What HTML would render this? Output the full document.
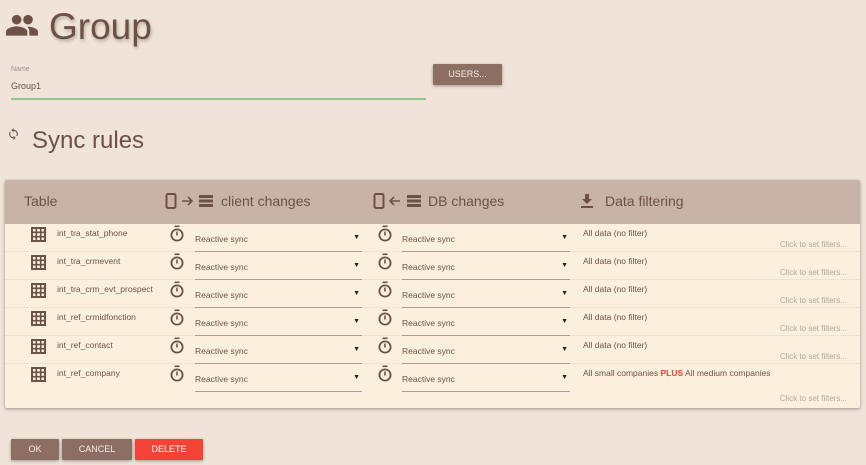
<!DOCTYPE html>
<html><head><meta charset="utf-8"><style>
*{margin:0;padding:0;box-sizing:border-box}
body{width:866px;height:465px;background:#f0e3d7;font-family:"Liberation Sans",sans-serif;color:#6d5147;position:relative;overflow:hidden}
.a{position:absolute;white-space:nowrap;display:block}
.btn{position:absolute;background:#8d6e62;color:#f5ece6;font-size:9px;text-align:center;box-shadow:0 1px 3px rgba(0,0,0,.35);border-radius:1px}
.card{position:absolute;left:5px;top:180px;width:855px;height:228px;background:#faf0dd;box-shadow:0 1px 3px rgba(0,0,0,.35);border-radius:2px;overflow:hidden}
.hdr{position:absolute;left:0;top:0;width:855px;height:44px;background:#c8b3a9}
.ht{position:absolute;top:13px;font-size:14px;color:#6d5147;white-space:nowrap}
.row{position:absolute;left:0;width:855px;height:28px;border-bottom:1px solid #ece2d3}
.nm{position:absolute;left:52px;top:4px;font-size:8.5px;white-space:nowrap}
.sel{position:absolute;top:0;height:28px;border-bottom:1px solid #a89d96;font-size:8.5px}
.sel span{position:absolute;left:0;top:10px;white-space:nowrap}
.sel b{position:absolute;right:2px;top:10px;font-size:7px;color:#222}
.df{position:absolute;left:578px;top:4px;font-size:8.5px;white-space:nowrap}
.cf{position:absolute;right:13px;top:16px;font-size:8px;color:#b3a69f;white-space:nowrap}
.g{position:absolute;left:26px;top:3px;width:15px;height:15px}
.t1{position:absolute;left:165px;top:1px;width:14px;height:17px}
.t2{position:absolute;left:373px;top:1px;width:14px;height:17px}
</style></head><body>
<svg class="a" style="left:6px;top:14px;width:32px;height:22px" width="32" height="22" viewBox="0 0 24 16"><circle cx="8" cy="4" r="3.6" fill="#6d5147"/><circle cx="16.5" cy="4" r="3.6" fill="#6d5147"/><path d="M0 16v-3c0-2.5 5-4 8-4s8 1.5 8 4v3z" fill="#6d5147"/><path d="M16 9.2c3 0 8 1.3 8 3.8v3h-6.5v-3c0-1.5-.6-2.7-1.5-3.8z" fill="#6d5147"/></svg>
<div class="a" style="left:49px;top:6px;font-size:37px;color:#6d5147;text-shadow:1px 2px 3px rgba(0,0,0,.25)">Group</div>
<div class="a" style="left:11px;top:66px;font-size:7px;color:#9d8f88">Name</div>
<div class="a" style="left:11px;top:81px;font-size:9px">Group1</div>
<div class="a" style="left:11px;top:98px;width:415px;height:2px;background:#8fc68c"></div>
<div class="btn" style="left:433px;top:64px;width:69px;height:21px;line-height:21px">USERS...</div>
<svg class="a" style="left:7px;top:127px;width:13px;height:14px" width="13" height="14" viewBox="0 0 24 24"><path d="M12 4V1L8 5l4 4V6c3.3 0 6 2.7 6 6 0 1-.3 2-.7 2.8l1.5 1.5C19.5 15 20 13.6 20 12c0-4.4-3.6-8-8-8zm0 14c-3.3 0-6-2.7-6-6 0-1 .3-2 .7-2.8L5.2 7.7C4.5 9 4 10.4 4 12c0 4.4 3.6 8 8 8v3l4-4-4-4z" fill="#6d5147"/></svg>
<div class="a" style="left:32px;top:127px;font-size:24px">Sync rules</div>

<div class="card">
<div class="hdr">
<div class="ht" style="left:19px">Table</div>
<svg class="a" style="left:160px;top:13px;width:52px;height:16px" width="52" height="16" viewBox="0 0 52 16"><rect x="1.5" y="1" width="9" height="14" rx="1.5" fill="none" stroke="#6d5147" stroke-width="2"/><path d="M17 8h10M23 4l4 4-4 4" fill="none" stroke="#6d5147" stroke-width="1.6"/><rect x="34" y="2" width="14" height="3" fill="#6d5147"/><rect x="34" y="6.5" width="14" height="3" fill="#6d5147"/><rect x="34" y="11" width="14" height="3" fill="#6d5147"/></svg>
<div class="ht" style="left:216px">client changes</div>
<svg class="a" style="left:368px;top:13px;width:52px;height:16px" width="52" height="16" viewBox="0 0 52 16"><rect x="1.5" y="1" width="9" height="14" rx="1.5" fill="none" stroke="#6d5147" stroke-width="2"/><path d="M17 8h10M21 4l-4 4 4 4" fill="none" stroke="#6d5147" stroke-width="1.6"/><rect x="34" y="2" width="14" height="3" fill="#6d5147"/><rect x="34" y="6.5" width="14" height="3" fill="#6d5147"/><rect x="34" y="11" width="14" height="3" fill="#6d5147"/></svg>
<div class="ht" style="left:423px">DB changes</div>
<svg class="a" style="left:576px;top:14px;width:12px;height:14px" width="12" height="14" viewBox="0 0 12 14"><path d="M4 0h4v5h3l-5 5-5-5h3z" fill="#6d5147"/><rect x="0" y="12" width="12" height="2" fill="#6d5147"/></svg>
<div class="ht" style="left:600px">Data filtering</div>
</div>

<div class="row" style="top:44px">
<svg class="g" viewBox="0 0 15 15"><rect x="1" y="1" width="13" height="13" fill="none" stroke="#6d5147" stroke-width="2"/><path d="M5.3 1v13M9.7 1v13M1 5.3h13M1 9.7h13" stroke="#6d5147" stroke-width="1.6"/></svg>
<div class="nm">int_tra_stat_phone</div>
<svg class="t1" viewBox="0 0 14 17"><rect x="4.5" y="0.5" width="5" height="1.6" fill="#6d5147"/><circle cx="7" cy="10" r="5.6" fill="none" stroke="#6d5147" stroke-width="1.8"/><path d="M7 6.5v4" stroke="#6d5147" stroke-width="1.6"/></svg>
<div class="sel" style="left:190px;width:167px"><span>Reactive sync</span><b>▼</b></div>
<svg class="t2" viewBox="0 0 14 17"><rect x="4.5" y="0.5" width="5" height="1.6" fill="#6d5147"/><circle cx="7" cy="10" r="5.6" fill="none" stroke="#6d5147" stroke-width="1.8"/><path d="M7 6.5v4" stroke="#6d5147" stroke-width="1.6"/></svg>
<div class="sel" style="left:397px;width:168px"><span>Reactive sync</span><b>▼</b></div>
<div class="df">All data (no filter)</div><div class="cf">Click to set filters...</div>
</div>

<div class="row" style="top:72px">
<svg class="g" viewBox="0 0 15 15"><rect x="1" y="1" width="13" height="13" fill="none" stroke="#6d5147" stroke-width="2"/><path d="M5.3 1v13M9.7 1v13M1 5.3h13M1 9.7h13" stroke="#6d5147" stroke-width="1.6"/></svg>
<div class="nm">int_tra_crmevent</div>
<svg class="t1" viewBox="0 0 14 17"><rect x="4.5" y="0.5" width="5" height="1.6" fill="#6d5147"/><circle cx="7" cy="10" r="5.6" fill="none" stroke="#6d5147" stroke-width="1.8"/><path d="M7 6.5v4" stroke="#6d5147" stroke-width="1.6"/></svg>
<div class="sel" style="left:190px;width:167px"><span>Reactive sync</span><b>▼</b></div>
<svg class="t2" viewBox="0 0 14 17"><rect x="4.5" y="0.5" width="5" height="1.6" fill="#6d5147"/><circle cx="7" cy="10" r="5.6" fill="none" stroke="#6d5147" stroke-width="1.8"/><path d="M7 6.5v4" stroke="#6d5147" stroke-width="1.6"/></svg>
<div class="sel" style="left:397px;width:168px"><span>Reactive sync</span><b>▼</b></div>
<div class="df">All data (no filter)</div><div class="cf">Click to set filters...</div>
</div>

<div class="row" style="top:100px">
<svg class="g" viewBox="0 0 15 15"><rect x="1" y="1" width="13" height="13" fill="none" stroke="#6d5147" stroke-width="2"/><path d="M5.3 1v13M9.7 1v13M1 5.3h13M1 9.7h13" stroke="#6d5147" stroke-width="1.6"/></svg>
<div class="nm">int_tra_crm_evt_prospect</div>
<svg class="t1" viewBox="0 0 14 17"><rect x="4.5" y="0.5" width="5" height="1.6" fill="#6d5147"/><circle cx="7" cy="10" r="5.6" fill="none" stroke="#6d5147" stroke-width="1.8"/><path d="M7 6.5v4" stroke="#6d5147" stroke-width="1.6"/></svg>
<div class="sel" style="left:190px;width:167px"><span>Reactive sync</span><b>▼</b></div>
<svg class="t2" viewBox="0 0 14 17"><rect x="4.5" y="0.5" width="5" height="1.6" fill="#6d5147"/><circle cx="7" cy="10" r="5.6" fill="none" stroke="#6d5147" stroke-width="1.8"/><path d="M7 6.5v4" stroke="#6d5147" stroke-width="1.6"/></svg>
<div class="sel" style="left:397px;width:168px"><span>Reactive sync</span><b>▼</b></div>
<div class="df">All data (no filter)</div><div class="cf">Click to set filters...</div>
</div>

<div class="row" style="top:128px">
<svg class="g" viewBox="0 0 15 15"><rect x="1" y="1" width="13" height="13" fill="none" stroke="#6d5147" stroke-width="2"/><path d="M5.3 1v13M9.7 1v13M1 5.3h13M1 9.7h13" stroke="#6d5147" stroke-width="1.6"/></svg>
<div class="nm">int_ref_crmidfonction</div>
<svg class="t1" viewBox="0 0 14 17"><rect x="4.5" y="0.5" width="5" height="1.6" fill="#6d5147"/><circle cx="7" cy="10" r="5.6" fill="none" stroke="#6d5147" stroke-width="1.8"/><path d="M7 6.5v4" stroke="#6d5147" stroke-width="1.6"/></svg>
<div class="sel" style="left:190px;width:167px"><span>Reactive sync</span><b>▼</b></div>
<svg class="t2" viewBox="0 0 14 17"><rect x="4.5" y="0.5" width="5" height="1.6" fill="#6d5147"/><circle cx="7" cy="10" r="5.6" fill="none" stroke="#6d5147" stroke-width="1.8"/><path d="M7 6.5v4" stroke="#6d5147" stroke-width="1.6"/></svg>
<div class="sel" style="left:397px;width:168px"><span>Reactive sync</span><b>▼</b></div>
<div class="df">All data (no filter)</div><div class="cf">Click to set filters...</div>
</div>

<div class="row" style="top:156px">
<svg class="g" viewBox="0 0 15 15"><rect x="1" y="1" width="13" height="13" fill="none" stroke="#6d5147" stroke-width="2"/><path d="M5.3 1v13M9.7 1v13M1 5.3h13M1 9.7h13" stroke="#6d5147" stroke-width="1.6"/></svg>
<div class="nm">int_ref_contact</div>
<svg class="t1" viewBox="0 0 14 17"><rect x="4.5" y="0.5" width="5" height="1.6" fill="#6d5147"/><circle cx="7" cy="10" r="5.6" fill="none" stroke="#6d5147" stroke-width="1.8"/><path d="M7 6.5v4" stroke="#6d5147" stroke-width="1.6"/></svg>
<div class="sel" style="left:190px;width:167px"><span>Reactive sync</span><b>▼</b></div>
<svg class="t2" viewBox="0 0 14 17"><rect x="4.5" y="0.5" width="5" height="1.6" fill="#6d5147"/><circle cx="7" cy="10" r="5.6" fill="none" stroke="#6d5147" stroke-width="1.8"/><path d="M7 6.5v4" stroke="#6d5147" stroke-width="1.6"/></svg>
<div class="sel" style="left:397px;width:168px"><span>Reactive sync</span><b>▼</b></div>
<div class="df">All data (no filter)</div><div class="cf">Click to set filters...</div>
</div>

<div class="row" style="top:184px;height:44px;border:none">
<svg class="g" viewBox="0 0 15 15"><rect x="1" y="1" width="13" height="13" fill="none" stroke="#6d5147" stroke-width="2"/><path d="M5.3 1v13M9.7 1v13M1 5.3h13M1 9.7h13" stroke="#6d5147" stroke-width="1.6"/></svg>
<div class="nm">int_ref_company</div>
<svg class="t1" viewBox="0 0 14 17"><rect x="4.5" y="0.5" width="5" height="1.6" fill="#6d5147"/><circle cx="7" cy="10" r="5.6" fill="none" stroke="#6d5147" stroke-width="1.8"/><path d="M7 6.5v4" stroke="#6d5147" stroke-width="1.6"/></svg>
<div class="sel" style="left:190px;width:167px"><span>Reactive sync</span><b>▼</b></div>
<svg class="t2" viewBox="0 0 14 17"><rect x="4.5" y="0.5" width="5" height="1.6" fill="#6d5147"/><circle cx="7" cy="10" r="5.6" fill="none" stroke="#6d5147" stroke-width="1.8"/><path d="M7 6.5v4" stroke="#6d5147" stroke-width="1.6"/></svg>
<div class="sel" style="left:397px;width:168px"><span>Reactive sync</span><b>▼</b></div>
<div class="df">All small companies <b style="color:#f44336">PLUS</b> All medium companies</div><div class="cf" style="top:30px">Click to set filters...</div>
</div>
</div>

<div class="btn" style="left:11px;top:439px;width:48px;height:21px;line-height:21px">OK</div>
<div class="btn" style="left:62px;top:439px;width:70px;height:21px;line-height:21px">CANCEL</div>
<div class="btn" style="left:135px;top:439px;width:68px;height:21px;line-height:21px;background:#f44336;color:#fff">DELETE</div>
</body></html>
